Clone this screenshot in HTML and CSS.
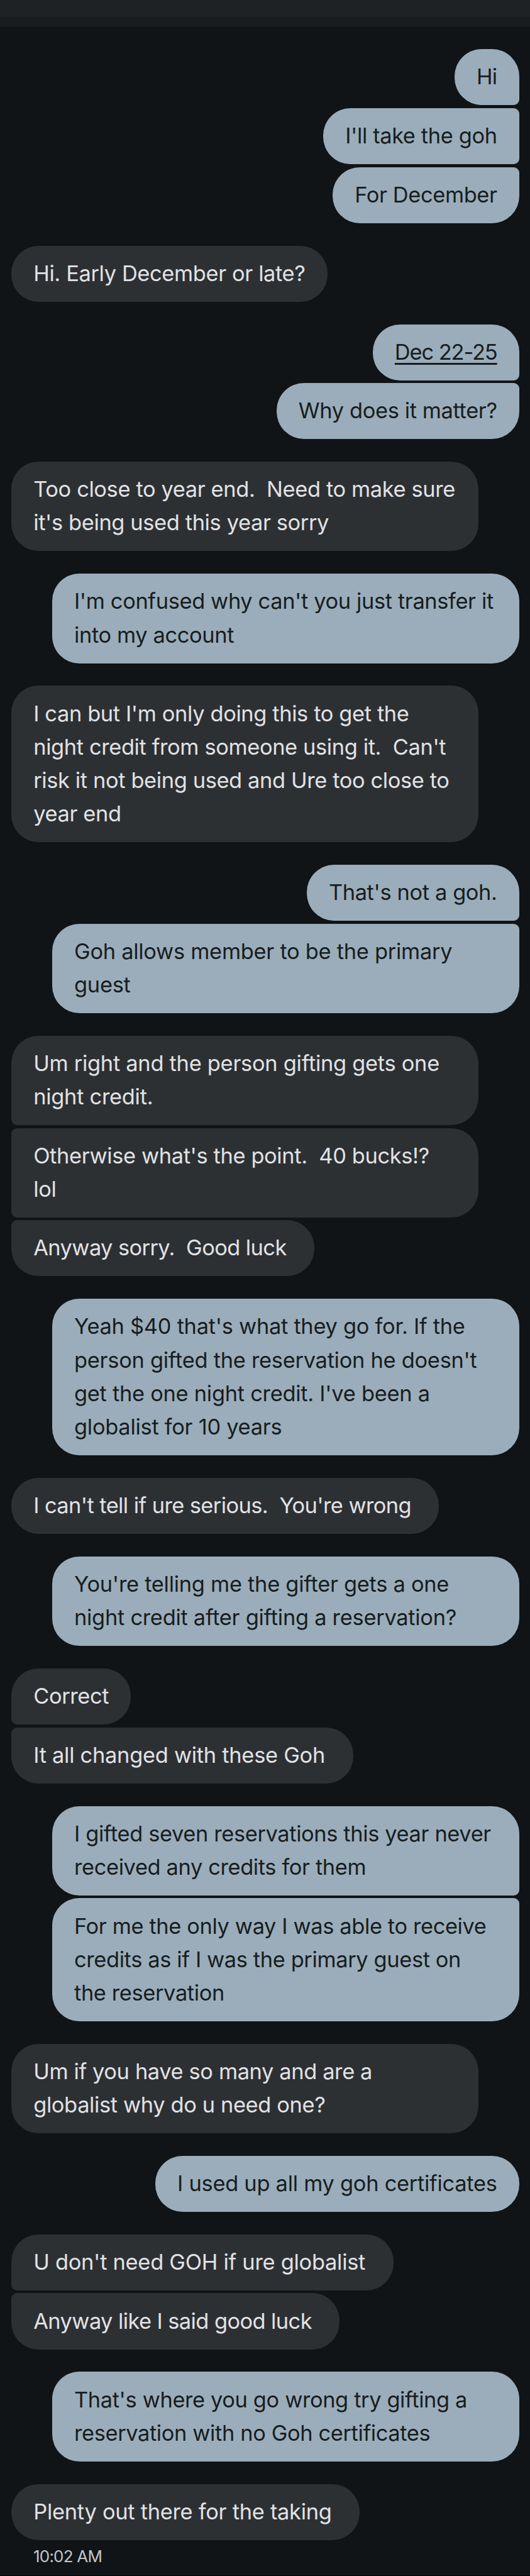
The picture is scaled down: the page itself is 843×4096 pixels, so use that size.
FILE: index.html
```html
<!DOCTYPE html>
<html lang="en">
<head>
    <meta charset="UTF-8">
    <title>Messages</title>
    <link rel="stylesheet" href="styles.css">
</head>
<body>
    <div class="top-bar"></div>
    <div class="top-bar-shade"></div>
    <div class="chat">
        <div class="group sent">
            <p class="bubble snug">Hi</p>
            <p class="bubble">I'll take the goh</p>
            <p class="bubble">For December</p>
        </div>
        <div class="group received">
            <p class="bubble">Hi. Early December or late?</p>
        </div>
        <div class="group sent">
            <p class="bubble digits"><span class="date-link">Dec 22-25</span></p>
            <p class="bubble">Why does it matter?</p>
        </div>
        <div class="group received">
            <p class="bubble wide">Too close to year end.&nbsp; Need to make sure<br>it's being used this year sorry</p>
        </div>
        <div class="group sent">
            <p class="bubble wide">I'm confused why can't you just transfer it<br>into my account</p>
        </div>
        <div class="group received">
            <p class="bubble wide">I can but I'm only doing this to get the<br>night credit from someone using it.&nbsp; Can't<br>risk it not being used and Ure too close to<br>year end</p>
        </div>
        <div class="group sent">
            <p class="bubble">That's not a goh.</p>
            <p class="bubble wide loose">Goh allows member to be the primary<br>guest</p>
        </div>
        <div class="group received">
            <p class="bubble wide loose">Um right and the person gifting gets one<br>night credit.</p>
            <p class="bubble wide">Otherwise what's the point.&nbsp; 40 bucks!?<br>lol</p>
            <p class="bubble snug">Anyway sorry.&nbsp; Good luck&nbsp;</p>
        </div>
        <div class="group sent">
            <p class="bubble wide loose">Yeah $40 that's what they go for. If the<br>person gifted the reservation he doesn't<br>get the one night credit. I've been a<br>globalist for 10 years</p>
        </div>
        <div class="group received">
            <p class="bubble snug">I can't tell if ure serious.&nbsp; You're wrong&nbsp;</p>
        </div>
        <div class="group sent">
            <p class="bubble wide loose">You're telling me the gifter gets a one<br>night credit after gifting a reservation?</p>
        </div>
        <div class="group received">
            <p class="bubble">Correct</p>
            <p class="bubble loose">It all changed with these Goh&nbsp;</p>
        </div>
        <div class="group sent">
            <p class="bubble wide">I gifted seven reservations this year never<br>received any credits for them</p>
            <p class="bubble wide">For me the only way I was able to receive<br>credits as if I was the primary guest on<br>the reservation</p>
        </div>
        <div class="group received">
            <p class="bubble wide">Um if you have so many and are a<br>globalist why do u need one?</p>
        </div>
        <div class="group sent">
            <p class="bubble loose">I used up all my goh certificates</p>
        </div>
        <div class="group received">
            <p class="bubble loose">U don't need GOH if ure globalist&nbsp;</p>
            <p class="bubble snug">Anyway like I said good luck&nbsp;</p>
        </div>
        <div class="group sent">
            <p class="bubble wide">That's where you go wrong try gifting a<br>reservation with no Goh certificates</p>
        </div>
        <div class="group received">
            <p class="bubble loose">Plenty out there for the taking&nbsp;</p>
        </div>
        <p class="time">10:02 AM</p>
    </div>
</body>
</html>
```

FILE: styles.css
```css
* {
    box-sizing: border-box;
    margin: 0;
    padding: 0;
}
html {
    background: #101417;
}
body {
    height: 4096px;
    overflow: hidden;
    background: #101417;
    border-bottom: 1px solid #000;
    font-family: Inter, Roboto, sans-serif;
}
.top-bar {
    height: 27.3px;
    background: #1e2225;
}
.top-bar-shade {
    height: 15px;
    background: #191d20;
}
.chat {
    padding: 35.8px 17.2px 0 18px;
}
.group {
    display: flex;
    flex-direction: column;
    gap: 4.69px;
    margin-bottom: 35.94px;
}
.sent {
    align-items: flex-end;
}
.received {
    align-items: flex-start;
}
.bubble {
    padding: 17.1px 35.2px 18.84px;
    border-radius: 43.5px;
    font-size: 34.4px;
    line-height: 53.127px;
    letter-spacing: -0.37px;
    white-space: nowrap;
}
.wide {
    width: 743px;
}
.loose {
    letter-spacing: -0.27px;
}
.snug {
    letter-spacing: -0.58px;
}
.digits {
    letter-spacing: -1.1px;
}
.sent .bubble {
    background: #9badbb;
    color: #171d20;
}
.received .bubble {
    background: #2d3033;
    color: #e1e2e5;
}

/* bubbles of one group join on the sender's side */
.sent .bubble:not(:first-child) {
    border-top-right-radius: 9px;
}
.sent .bubble:not(:last-child) {
    border-bottom-right-radius: 9px;
}
.received .bubble:not(:first-child) {
    border-top-left-radius: 9px;
}
.received .bubble:not(:last-child) {
    border-bottom-left-radius: 9px;
}
.date-link {
    text-decoration: underline;
    text-decoration-thickness: 3px;
    text-underline-offset: 5px;
}
.time {
    margin-top: -27.5px;
    padding-left: 35px;
    color: #c0c7cd;
    font-size: 26px;
    line-height: 36px;
    letter-spacing: -0.8px;
}
```
